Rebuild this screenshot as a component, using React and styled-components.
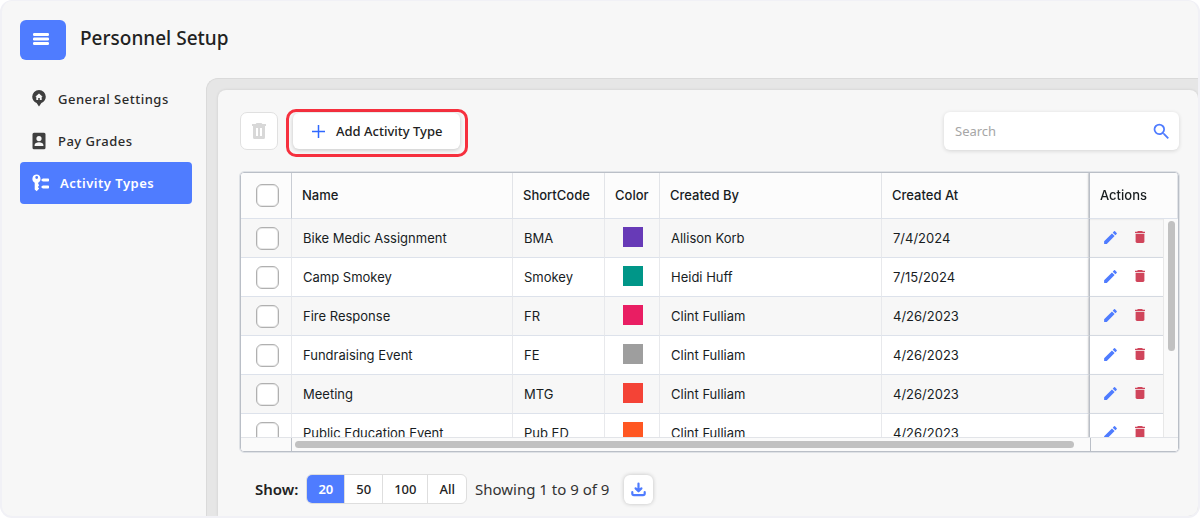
import React from 'react'
import styled, { createGlobalStyle, css } from 'styled-components'
import { MdEdit, MdSearch } from 'react-icons/md'

const GlobalStyle = createGlobalStyle`
    * {
        box-sizing: border-box;
    }

    body {
        margin: 0;
        background-color: #fff;
        color: #222;
        font-family: "Noto Sans", "Open Sans", sans-serif;
    }

    button, input {
        font-family: inherit;
    }
`;

// LAYOUT
const Page = styled.div`
    display: flex;
    flex-direction: column;
    min-height: 100vh;
    background-color: #f7f7f7;
    border: 2px solid #f1f1f6;
    border-top-width: 1px;
    border-radius: 12px;
    overflow: hidden;
`;

const Header = styled.header`
    display: flex;
    align-items: center;
    gap: 14px;
    height: 77px;
    padding-left: 18px;
`;

const MenuButton = styled.button`
    display: flex;
    align-items: center;
    justify-content: center;
    width: 46px;
    height: 40px;
    padding: 0 4px 2px 0;
    color: #fff;
    background-color: #4f7cff;
    border: 0;
    border-radius: 6px;
`;

const Title = styled.h1`
    margin: 0;
    padding-bottom: 4px;
    font-size: 19px;
    line-height: 24px;
    font-weight: 500;
    color: #222;
`;

const Main = styled.div`
    display: flex;
    flex: 1;
`;

const Sidebar = styled.nav`
    width: 204px;
    flex-shrink: 0;
    padding: 0 14px 0 18px;
`;

const NavLink = styled.a`
    display: flex;
    align-items: center;
    gap: 9px;
    height: 42px;
    padding-left: 9px;
    font-size: 13px;
    font-weight: 500;
    letter-spacing: 0.5px;
    text-decoration: none;
    color: #2b2b2b;
    border-radius: 4px;

    svg {
        color: #3f3f3f;
    }

    ${({ $active }) => $active && css`
        color: #fff;
        font-weight: 600;
        background-color: #4f7cff;

        svg {
            color: #fff;
        }
    `}
`;

const Surround = styled.div`
    display: flex;
    flex: 1;
    min-width: 0;
    padding: 11px 0 0 11px;
    background-color: #e6e6e6;
    border: 1px solid #dadada;
    border-width: 1px 0 0 1px;
    border-radius: 12px 0 0 0;
`;

const Panel = styled.main`
    flex: 1;
    min-width: 0;
    padding: 19px 19px 12px 22px;
    background-color: #f7f7f7;
    border-radius: 8px 8px 0 0;
    box-shadow: 0 0 3px rgba(0, 0, 0, 0.12);
`;

// TOOLBAR
const Toolbar = styled.div`
    display: flex;
    align-items: flex-start;
    gap: 8px;
    margin-bottom: 15px;
`;

const DeleteButton = styled.button`
    display: flex;
    align-items: center;
    justify-content: center;
    width: 38px;
    height: 38px;
    margin-top: 3px;
    padding: 0;
    color: #d8d8d8;
    background-color: #fff;
    border: 1px solid #e0e0e0;
    border-radius: 7px;
`;

const Highlight = styled.div`
    padding: 1px 5px 5px 4px;
    border: 3px solid #f6303e;
    border-radius: 10px;
`;

const AddButton = styled.button`
    display: flex;
    align-items: center;
    gap: 11px;
    height: 36px;
    padding: 0 18px 0 19px;
    font-size: 13px;
    font-weight: 500;
    color: #222;
    background-color: #fff;
    border: 0;
    border-radius: 6px;
    box-shadow: 0 1px 4px rgba(0, 0, 0, 0.2);

    svg {
        color: #2f68ff;
    }
`;

const SearchBox = styled.label`
    display: flex;
    align-items: center;
    width: 235px;
    height: 38px;
    margin: 3px 0 0 auto;
    padding: 0 7px 0 11px;
    color: #4f7cff;
    background-color: #fff;
    border-radius: 6px;
    box-shadow: 0 1px 4px rgba(0, 0, 0, 0.14);
`;

const SearchInput = styled.input`
    flex: 1;
    min-width: 0;
    padding: 0;
    font-size: 13px;
    color: #222;
    background: none;
    border: 0;
    outline: 0;

    &::placeholder {
        color: #a6a6a6;
        opacity: 1;
    }
`;

// GRID
const GridFrame = styled.div`
    position: relative;
    border: 1px solid #babfc7;
    outline: 1px solid #dfe2e6;
    border-radius: 4px;
    overflow: hidden;
    background-color: #fff;
`;

const Viewport = styled.div`
    height: 264px;
    overflow-y: auto;
    scrollbar-width: none;
`;

const Table = styled.table`
    width: 100%;
    table-layout: fixed;
    border-collapse: separate;
    border-spacing: 0;
    font-family: Inter, sans-serif;
    font-size: 13px;
    color: #181d1f;
`;

const pinned = css`
    border-left: 1px solid #babfc7;
    box-shadow: -1px 0 2px rgba(0, 0, 0, 0.12);
`;

const Th = styled.th`
    position: sticky;
    top: 0;
    width: ${({ $width }) => $width};
    height: 46px;
    padding: 0 0 1px 10px;
    text-align: left;
    font-weight: 500;
    background-color: #fcfcfc;
    border-bottom: 1px solid #dde2eb;
    border-right: 1px solid ${({ $dark }) => ($dark ? '#c9cdd4' : '#e2e4e8')};
    ${({ $pinned }) => $pinned && pinned}
`;

const Tr = styled.tr`
    background-color: #fff;

    &:nth-child(odd) {
        background-color: #f7f7f7;
    }
`;

const Td = styled.td`
    height: 39px;
    padding: 0 0 0 ${({ $pinned }) => ($pinned ? '12px' : '11px')};
    border-bottom: 1px solid #dde2eb;
    border-right: 1px solid #e8e9ec;
    ${({ $pinned }) => $pinned && pinned}
`;

const CheckCell = styled(Td)`
    padding: 0 0 0 2px;
`;

const CheckHead = styled(Th)`
    padding: 0 0 0 2px;
`;

const Checkbox = styled.input`
    appearance: none;
    display: block;
    width: 23px;
    height: 23px;
    margin: 0 auto;
    background-color: #fff;
    border: 1px solid #b0b0b0;
    border-radius: 6px;
    box-shadow: inset 0 0 0 1px #e8e8e8;
`;

const Swatch = styled.span`
    display: block;
    width: 20px;
    height: 20px;
    margin: 0 0 2px 7px;
    background-color: ${({ $color }) => $color};
`;

const Actions = styled.div`
    display: flex;
    gap: 13px;
    padding-bottom: 2px;
`;

const IconButton = styled.button`
    display: flex;
    padding: 0;
    color: ${({ $color }) => $color};
    background: none;
    border: 0;
`;

const VerticalTrack = styled.div`
    position: absolute;
    top: 46px;
    right: 0;
    bottom: 14px;
    width: 15px;
    padding: 2px 3px 0 4px;
    background-color: #fafafa;
    border-left: 1px solid #e8e8e8;
`;

const VerticalThumb = styled.div`
    height: 130px;
    background-color: #c1c1c1;
    border-radius: 4px;
`;

const HorizontalTrack = styled.div`
    display: grid;
    grid-template-columns: 50px 1fr 88px;
    height: 14px;
    background-color: #fafafa;
    border-top: 1px solid #e2e4e8;
`;

const TrackPart = styled.div`
    padding: 3px 16px 0 3px;
    border-left: ${({ $divided }) => ($divided ? '1px solid #babfc7' : '0')};
`;

const HorizontalThumb = styled.div`
    height: 7px;
    background-color: #c1c1c1;
    border-radius: 4px;
`;

// FOOTER
const Footer = styled.footer`
    display: flex;
    align-items: center;
    gap: 8px;
    margin-top: 22px;
    padding-left: 15px;
    font-size: 15px;
    line-height: 20px;
`;

const ShowLabel = styled.span`
    font-size: 15px;
    font-weight: 600;
`;

const PageSizes = styled.div`
    display: flex;
    height: 30px;
    border: 1px solid #dedede;
    border-radius: 6px;
    background-color: #fff;
    overflow: hidden;
`;

const SizeButton = styled.button`
    padding: 0 11px;
    font-size: 13px;
    font-weight: 500;
    color: #222;
    background: none;
    border: 0;
    border-left: 1px solid #dedede;

    &:first-child {
        border-left: 0;
    }

    ${({ $active }) => $active && css`
        color: #fff;
        font-weight: 600;
        background-color: #4f7cff;
    `}
`;

const Summary = styled.span`
    color: #333;
`;

const DownloadButton = styled.button`
    display: flex;
    align-items: center;
    justify-content: center;
    width: 29px;
    height: 29px;
    margin-left: 7px;
    padding: 0;
    color: #4f7cff;
    background-color: #fff;
    border: 0;
    border-radius: 6px;
    box-shadow: 0 0 4px rgba(0, 0, 0, 0.22);
`;

// ICONS
const MenuIcon = () => (
    <svg width="16" height="14" viewBox="0 0 16 14" fill="currentColor">
        <rect y="1" width="16" height="3" rx="1.2" />
        <rect y="5.5" width="16" height="3" rx="1.2" />
        <rect y="10" width="16" height="3" rx="1.2" />
    </svg>
)

const PinIcon = () => (
    <svg width="20" height="20" viewBox="0 0 20 20" fill="currentColor">
        <path fillRule="evenodd" d="M10 1a6.800 6.800 0 0 0-6.800 6.800c0 3 1.800 5.200 4.400 6.200L10 17.600l2.400-3.600c2.600-1 4.400-3.200 4.400-6.200A6.800 6.800 0 0 0 10 1zM6.300 7.800 10 4.500l3.700 3.300h-1v3.200h-1.900V9H9.200v2H7.300V7.800z" />
    </svg>
)

const BadgeIcon = () => (
    <svg width="20" height="20" viewBox="0 0 20 20" fill="currentColor">
        <path fillRule="evenodd" d="M5 1.800h10a1.500 1.500 0 0 1 1.500 1.500v13.400a1.500 1.500 0 0 1-1.500 1.500H5a1.500 1.500 0 0 1-1.500-1.500V3.300A1.500 1.500 0 0 1 5 1.800zM10 5a2.600 2.600 0 1 0 0 5.200A2.600 2.600 0 0 0 10 5zM5.600 14.900h8.800v-1c0-1.500-2.300-2.600-4.400-2.600s-4.400 1.100-4.400 2.600z" />
    </svg>
)

const KeyIcon = () => (
    <svg width="22" height="20" viewBox="0 0 22 20" fill="currentColor">
        <path fillRule="evenodd" d="M7.700 1.600a4.300 4.300 0 0 0-2 8.100v6.700l2 1.900 2.500-2.700-1.400-1.700 1.400-1.700-1-1.500v-1A4.300 4.300 0 0 0 7.700 1.600zm0 1.500a1.400 1.400 0 1 1 0 2.800 1.400 1.400 0 0 1 0-2.800z" />
        <path d="M13.800 5.500h5.400q.8 0 .8.800v1.400q0 .8-.8.800h-5.400L12 7zM13.800 12.500h5.400q.8 0 .8.800v1.400q0 .8-.8.800h-5.400L12 14z" />
    </svg>
)

const PlusIcon = () => (
    <svg width="13" height="13" viewBox="0 0 13 13" fill="none" stroke="currentColor" strokeWidth="1.5">
        <path d="M6.500 0v13M0 6.500h13" />
    </svg>
)

const TrashOutlineIcon = () => (
    <svg width="14" height="16" viewBox="0 0 14 16" fill="currentColor">
        <path fillRule="evenodd" d="M4.500 0h5l.8 1H14v2h-1v11.500a1.500 1.500 0 0 1-1.500 1.500h-9A1.500 1.500 0 0 1 1 14.500V3H0V1h3.700zM4 5v8h2V5zm4 0v8h2V5z" />
    </svg>
)

const TrashIcon = () => (
    <svg width="16" height="16" viewBox="0 0 16 16" fill="currentColor">
        <path d="M5.800 2h4.400l.6.800H13V4H3V2.800h2.200z" />
        <path d="M3.600 4.700h8.800v7.900a1.400 1.400 0 0 1-1.400 1.400H5a1.400 1.400 0 0 1-1.400-1.400z" />
    </svg>
)

const DownloadIcon = () => (
    <svg width="15" height="15" viewBox="0 0 15 15" fill="none" stroke="currentColor" strokeWidth="2.2" strokeLinecap="round" strokeLinejoin="round">
        <path d="M7.500 1.500v7.500M4.600 6.400l2.900 2.900 2.900-2.900M1.300 10.200v1.300c0 1.200.5 1.700 1.700 1.700h9c1.200 0 1.700-.5 1.700-1.700v-1.300" />
    </svg>
)

// DATA
const navItems = [
    { label: 'General Settings', Icon: PinIcon },
    { label: 'Pay Grades', Icon: BadgeIcon },
    { label: 'Activity Types', Icon: KeyIcon, active: true },
]

const rows = [
    { name: 'Bike Medic Assignment', code: 'BMA', color: '#673ab7', by: 'Allison Korb', at: '7/4/2024' },
    { name: 'Camp Smokey', code: 'Smokey', color: '#009688', by: 'Heidi Huff', at: '7/15/2024' },
    { name: 'Fire Response', code: 'FR', color: '#e91e63', by: 'Clint Fulliam', at: '4/26/2023' },
    { name: 'Fundraising Event', code: 'FE', color: '#9e9e9e', by: 'Clint Fulliam', at: '4/26/2023' },
    { name: 'Meeting', code: 'MTG', color: '#f44336', by: 'Clint Fulliam', at: '4/26/2023' },
    { name: 'Public Education Event', code: 'Pub ED', color: '#ff5722', by: 'Clint Fulliam', at: '4/26/2023' },
]

const pageSizes = ['20', '50', '100', 'All']

// MARKUP
const ActivityTable = () => (
    <GridFrame>
        <Viewport>
            <Table>
                <thead>
                    <tr>
                        <CheckHead $width="51px" $dark><Checkbox type="checkbox" aria-label="Select all" /></CheckHead>
                        <Th $width="221px">Name</Th>
                        <Th $width="92px">ShortCode</Th>
                        <Th $width="55px">Color</Th>
                        <Th $width="222px">Created By</Th>
                        <Th>Created At</Th>
                        <Th $width="89px" $pinned>Actions</Th>
                    </tr>
                </thead>
                <tbody>
                    {rows.map(({ name, code, color, by, at }) => (
                        <Tr key={name}>
                            <CheckCell><Checkbox type="checkbox" aria-label={`Select ${name}`} /></CheckCell>
                            <Td>{name}</Td>
                            <Td>{code}</Td>
                            <Td><Swatch $color={color} /></Td>
                            <Td>{by}</Td>
                            <Td>{at}</Td>
                            <Td $pinned>
                                <Actions>
                                    <IconButton $color="#4f7cff" aria-label={`Edit ${name}`}><MdEdit size={17} /></IconButton>
                                    <IconButton $color="#d0455b" aria-label={`Delete ${name}`}><TrashIcon /></IconButton>
                                </Actions>
                            </Td>
                        </Tr>
                    ))}
                </tbody>
            </Table>
        </Viewport>
        <HorizontalTrack>
            <TrackPart />
            <TrackPart $divided><HorizontalThumb /></TrackPart>
            <TrackPart $divided />
        </HorizontalTrack>
        <VerticalTrack><VerticalThumb /></VerticalTrack>
    </GridFrame>
)

const App = () => {
    return(
        <>
            <GlobalStyle />
            <Page>
                <Header>
                    <MenuButton aria-label="Menu"><MenuIcon /></MenuButton>
                    <Title>Personnel Setup</Title>
                </Header>
                <Main>
                    <Sidebar>
                        {navItems.map(({ label, Icon, active }) => (
                            <NavLink key={label} href="#" $active={active}><Icon />{label}</NavLink>
                        ))}
                    </Sidebar>
                    <Surround>
                        <Panel>
                            <Toolbar>
                                <DeleteButton aria-label="Delete selected" disabled><TrashOutlineIcon /></DeleteButton>
                                <Highlight>
                                    <AddButton><PlusIcon />Add Activity Type</AddButton>
                                </Highlight>
                                <SearchBox>
                                    <SearchInput type="text" placeholder="Search" aria-label="Search" />
                                    <MdSearch size={21} />
                                </SearchBox>
                            </Toolbar>
                            <ActivityTable />
                            <Footer>
                                <ShowLabel>Show:</ShowLabel>
                                <PageSizes>
                                    {pageSizes.map((size) => (
                                        <SizeButton key={size} $active={size === '20'}>{size}</SizeButton>
                                    ))}
                                </PageSizes>
                                <Summary>Showing 1 to 9 of 9</Summary>
                                <DownloadButton aria-label="Download"><DownloadIcon /></DownloadButton>
                            </Footer>
                        </Panel>
                    </Surround>
                </Main>
            </Page>
        </>
    )
}

export default App
